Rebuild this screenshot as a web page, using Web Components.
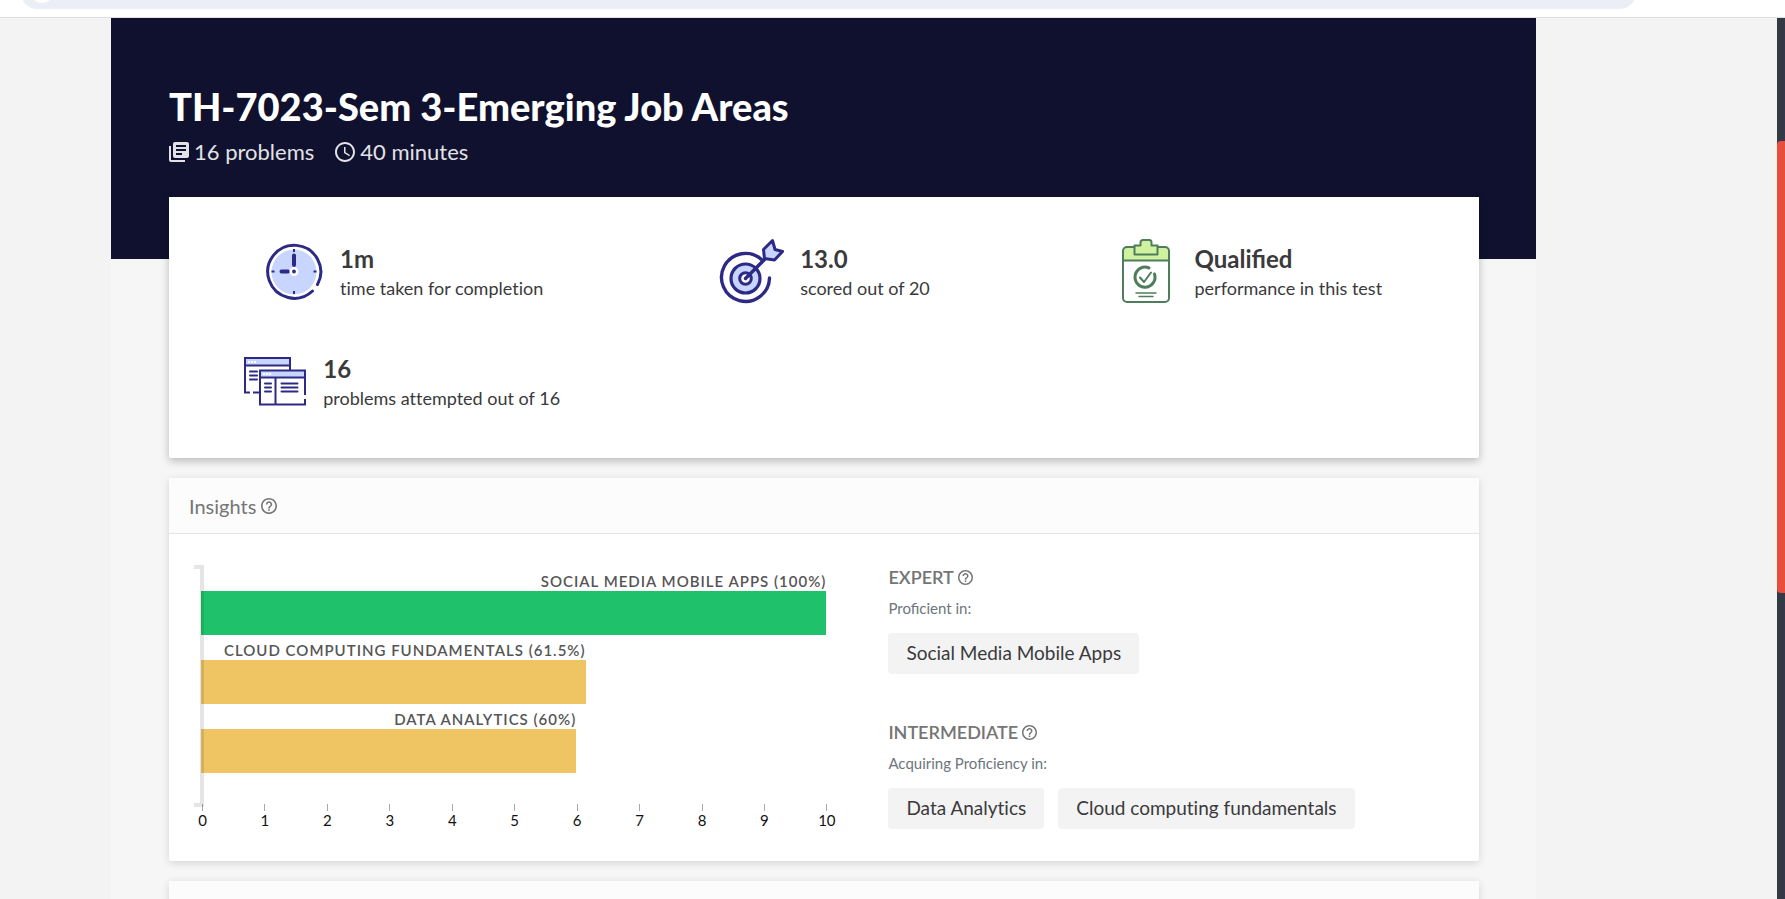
<!DOCTYPE html>
<html lang="en">
<head>
<meta charset="utf-8">
<title>TH-7023-Sem 3-Emerging Job Areas</title>
<style>
  html, body { margin: 0; height: 100%; }
  body { font-family: Lato, "Open Sans", sans-serif; color: #3a3a3c; background: #f3f3f3; overflow: hidden; }
</style>
</head>
<body>
<report-shell>
  <browser-bar slot="bar"></browser-bar>
  <report-hero heading="TH-7023-Sem 3-Emerging Job Areas">
    <meta-item icon="books">16 problems</meta-item>
    <meta-item icon="time">40 minutes</meta-item>
  </report-hero>
  <stat-card>
    <stat-item icon="clock" value="1m">time taken for completion</stat-item>
    <stat-item icon="target" value="13.0">scored out of 20</stat-item>
    <stat-item icon="clipboard" value="Qualified">performance in this test</stat-item>
    <stat-item icon="windows" value="16">problems attempted out of 16</stat-item>
  </stat-card>
  <report-panel heading="Insights">
    <skill-chart slot="chart" max="10">
      <skill-bar value="100" tone="good">Social Media Mobile Apps (100%)</skill-bar>
      <skill-bar value="61.5" tone="fair">Cloud Computing Fundamentals (61.5%)</skill-bar>
      <skill-bar value="60" tone="fair">Data Analytics (60%)</skill-bar>
    </skill-chart>
    <skill-level heading="Expert" note="Proficient in:">
      <skill-chip>Social Media Mobile Apps</skill-chip>
    </skill-level>
    <skill-level heading="Intermediate" note="Acquiring Proficiency in:">
      <skill-chip>Data Analytics</skill-chip>
      <skill-chip>Cloud computing fundamentals</skill-chip>
    </skill-level>
  </report-panel>
  <report-panel></report-panel>
</report-shell>

<script>
const define = (name, render) => customElements.define(name, class extends HTMLElement {
  constructor() {
    super();
    this.attachShadow({ mode: 'open' }).innerHTML = render(this);
  }
});

const ICONS = {
  books: `<svg width="20" height="20" viewBox="2 2 20 20" fill="currentColor"><path d="M4 6H2v14c0 1.1.9 2 2 2h14v-2H4V6zm16-4H8c-1.1 0-2 .9-2 2v12c0 1.1.9 2 2 2h12c1.1 0 2-.9 2-2V4c0-1.1-.9-2-2-2zm-1 9H9V9h10v2zm-4 4H9v-2h6v2zm4-8H9V5h10v2z"/></svg>`,
  time: `<svg width="20" height="20" viewBox="2 2 20 20" fill="currentColor"><path d="M11.99 2C6.47 2 2 6.48 2 12s4.47 10 9.99 10C17.52 22 22 17.52 22 12S17.52 2 11.99 2zM12 20c-4.42 0-8-3.58-8-8s3.58-8 8-8 8 3.58 8 8-3.58 8-8 8zm.5-13H11v6l5.25 3.15.75-1.23-4.5-2.67z"/></svg>`,
  clock: `<svg width="66" height="66" viewBox="0 0 66 66" fill="none" stroke="#2d2a85" stroke-linecap="round">
    <circle cx="36" cy="34" r="22.500" fill="#c8d5ff" stroke="none"/>
    <path stroke-width="3" d="M59.500 46.500A26.500 26.500 0 1 0 54.500 53"/>
    <path stroke-width="4" d="M36 17.500V27M23.500 33.500H30"/>
    <path stroke-width="2" stroke-linecap="butt" d="M36 11v3M36 53v3M13.500 33.500h3M55.500 33.500h3"/>
    <circle cx="36" cy="33.500" r="3.200" fill="#2d2a85" stroke="#fff" stroke-width="2.600"/></svg>`,
  target: `<svg width="66" height="66" viewBox="-1 0 66 66" fill="none" stroke="#2d2a85" stroke-linecap="round" stroke-linejoin="round">
    <path stroke-width="3.400" d="M42.500 21.500A24 24 0 1 0 50.500 40"/>
    <circle cx="26.500" cy="40.500" r="14.500" fill="#c8d5ff" stroke-width="3.200"/>
    <circle cx="26.500" cy="40.500" r="5.800" fill="#fff" stroke-width="3"/>
    <path stroke-width="3.400" d="M26.500 40.500L46 21"/>
    <path fill="#c8d5ff" stroke-width="3" d="M45.500 20.500L44.500 11.500L53.500 2.500L56 11.500L63.500 13.500L55.500 22Z"/></svg>`,
  clipboard: `<svg width="66" height="66" viewBox="0 0 66 66" fill="none" stroke="#4f7d5c" stroke-width="2" stroke-linecap="round" stroke-linejoin="round">
    <path fill="#d0f2a0" stroke="none" d="M10.500 22V13q0-4 4-4H52q4 0 4 4v9z"/>
    <rect x="10" y="9" width="46" height="55" rx="4"/>
    <path d="M10 22.500H56"/>
    <path fill="#d0f2a0" d="M21.500 16.500V7.500H27.500V4.500Q27.500 2 30 2H36.500Q38.500 2 38.500 4.500V7.500H44.500V16.500Z"/>
    <path stroke-width="3" d="M36 30A10 10 0 1 0 41.500 36"/>
    <path stroke-width="2" d="M27 39.500L31 44L38 34.500"/>
    <path stroke-width="1.500" d="M23 55H43M26 58.500H40"/></svg>`,
  windows: `<svg width="66" height="66" viewBox="0 -1 66 66" fill="none" stroke="#2d2a85" stroke-width="2" stroke-linecap="square">
    <path fill="#c8d5ff" stroke="none" d="M5 10h44v6H5zM20 22h44v6H20z"/>
    <path d="M8 43.500H4V9H49V21M13 43.500H18M4 16.500H49"/>
    <path d="M64 45V21.500H19V55.500H64V51M19 28.500H64M34.500 29V55"/>
    <path stroke-linecap="round" d="M9 22.500h7M9 26.500h7M9 30.500h7M24 34.500h6M24 38.500h6M24 42.500h6M40.500 34.500h16M40.500 38.500h16M40.500 42.500h16"/>
    <path stroke="#fff" stroke-dasharray="2 1" stroke-linecap="butt" d="M7 13h8M22 25h8"/></svg>`
};

define('browser-bar', () => `
  <style>
    :host { display: flex; align-items: flex-end; height: 17px; overflow: hidden; background: #fff; border-bottom: 1px solid #e0e0e0; padding: 0 148px 0 20px; }
    form { flex: 1; display: flex; align-items: center; gap: 8px; height: 36px; margin-bottom: 8px; padding: 0 10px; border-radius: 18px; background: #ebeef7; }
    i { width: 24px; height: 24px; border-radius: 50%; background: #fff; }
    input { flex: 1; border: 0; background: none; outline: 0; font: inherit; }
  </style>
  <form><i></i><input type="text" aria-label="Address"></form>`);

define('report-shell', () => `
  <style>
    :host { display: flex; flex-direction: column; height: 100vh; }
    .view { flex: 1; min-height: 0; display: flex; }
    main { flex: 1; min-width: 0; overflow: hidden; padding: 0 241px 0 111px; }
    .page { display: flex; flex-direction: column; gap: 20px; min-height: 100%; background: #f6f6f6; }
    .track { width: 8px; background: #333a46; padding-top: 123px; box-sizing: border-box; }
    .thumb { height: 452px; border-radius: 4px 0 0 4px; background: #e94e3d; }
  </style>
  <slot name="bar"></slot>
  <div class="view">
    <main><div class="page"><slot></slot></div></main>
    <div class="track"><div class="thumb"></div></div>
  </div>`);

define('report-hero', el => `
  <style>
    :host { display: block; box-sizing: border-box; height: 241px; padding: 64px 58px 0; background: #10112e; color: #fff; }
    h1 { margin: 0; font-size: 38px; line-height: 48px; font-weight: 900; }
    div { display: flex; gap: 21px; margin-top: 9px; }
  </style>
  <h1>${el.getAttribute('heading')}</h1>
  <div><slot></slot></div>`);

define('meta-item', el => `
  <style>
    :host { display: flex; align-items: center; gap: 5px; font-size: 22px; line-height: 26px; color: #e2e2e6; }
  </style>
  ${ICONS[el.getAttribute('icon')]}<span><slot></slot></span>`);

define('stat-card', () => `
  <style>
    :host { display: grid; grid-template-columns: repeat(3, 1fr); row-gap: 44px; margin: -82px 57px 0 58px; padding: 41px 20px 44px; background: #fff; border-radius: 0 0 2px 2px; box-shadow: 0 3px 8px rgba(0,0,0,.25); }
  </style>
  <slot></slot>`);

define('stat-item', el => `
  <style>
    :host { display: flex; justify-content: center; align-items: center; gap: 16px; height: 66px; }
    svg { flex: none; }
    div { padding-top: 4px; }
    strong { display: block; font-size: 24px; line-height: 30px; font-weight: 700; }
    span { display: block; font-size: 18px; line-height: 28px; font-variant-ligatures: none; }
  </style>
  ${ICONS[el.getAttribute('icon')]}
  <div><strong>${el.getAttribute('value')}</strong><span><slot></slot></span></div>`);

define('help-button', () => `
  <style>
    :host { display: flex; }
    button { display: flex; padding: 0; border: 0; background: none; color: inherit; cursor: pointer; }
    svg { width: var(--help-size, 16px); height: var(--help-size, 16px); }
  </style>
  <button type="button" aria-label="Help"><svg viewBox="2 2 20 20" fill="currentColor"><path d="M11 18h2v-2h-2v2zm1-16C6.480 2 2 6.480 2 12s4.480 10 10 10 10-4.480 10-10S17.520 2 12 2zm0 18c-4.410 0-8-3.590-8-8s3.590-8 8-8 8 3.590 8 8-3.590 8-8 8zm0-14c-2.210 0-4 1.790-4 4h2c0-1.100.9-2 2-2s2 .9 2 2c0 2-3 1.750-3 5h2c0-2.250 3-2.500 3-5 0-2.210-1.790-4-4-4z"/></svg></button>`);

define('report-panel', el => `
  <style>
    :host { display: block; margin: 0 57px 0 58px; background: #fff; border-radius: 2px; box-shadow: 0 2px 8px rgba(0,0,0,.14); }
    header { display: flex; align-items: center; gap: 5px; height: 55px; padding: 0 20px; background: #fcfcfc; border-bottom: 1px solid #e4e4e4; color: #757575; }
    h2 { margin: 0; font-size: 20px; line-height: 24px; font-weight: 400; }
    .body { display: grid; grid-template-columns: 55% 1fr; padding: 31px 2px 32px 0; }
    .levels { display: flex; flex-direction: column; gap: 46px; }
  </style>
  <header>${el.hasAttribute('heading') ? `<h2>${el.getAttribute('heading')}</h2><help-button></help-button>` : ''}</header>
  <div class="body"><slot name="chart"></slot><div class="levels"><slot></slot></div></div>`);

define('skill-chart', el => `
  <style>
    :host { display: block; padding: 0 62px 0 32px; }
    .plot { position: relative; height: 242px; padding-top: 1px; box-sizing: border-box; }
    .axis { position: absolute; left: -7px; top: 0; bottom: 0; width: 10px; box-sizing: border-box; border: 4px solid rgba(0,0,0,.1); border-left: 0; }
    .scale { display: flex; justify-content: space-between; margin: 0 -1px 0 1px; }
    .tick { display: flex; flex-direction: column; align-items: center; width: 1px; margin-top: -3px; font-size: 15px; line-height: 18px; color: #111; }
    .tick::before { content: ""; width: 1px; height: 7px; background: #aaa; }
  </style>
  <div class="plot"><slot></slot><div class="axis"></div></div>
  <div class="scale">${Array.from({ length: +el.getAttribute('max') + 1 }, (_, i) => `<span class="tick">${i}</span>`).join('')}</div>`);

define('skill-bar', el => `
  <style>
    :host { display: block; width: ${el.getAttribute('value')}%; }
    .label { display: flex; justify-content: flex-end; padding-top: 5px; white-space: nowrap; font-size: 15px; line-height: 20px; font-weight: 600; letter-spacing: 1px; text-transform: uppercase; color: #555; }
    .bar { height: 44px; background: ${el.getAttribute('tone') === 'good' ? '#1fc16b' : '#efc564'}; }
  </style>
  <div class="label"><span><slot></slot></span></div><div class="bar"></div>`);

define('skill-level', el => `
  <style>
    :host { display: block; }
    .head { display: flex; align-items: center; gap: 4px; color: #757575; --help-size: 15px; }
    h3 { margin: 0; font-size: 18px; line-height: 24px; font-weight: 600; text-transform: uppercase; }
    p { margin: 7px 0 13px; font-size: 15px; line-height: 24px; color: #6c757d; }
    .chips { display: flex; gap: 14px; }
  </style>
  <div class="head"><h3>${el.getAttribute('heading')}</h3><help-button></help-button></div>
  <p>${el.getAttribute('note')}</p>
  <div class="chips"><slot></slot></div>`);

define('skill-chip', () => `
  <style>
    :host { display: block; padding: 8px 18px 9px; border-radius: 4px; background: #f3f3f3; font-size: 19px; line-height: 24px; white-space: nowrap; font-variant-ligatures: none; }
  </style>
  <slot></slot>`);
</script>
</body>
</html>
